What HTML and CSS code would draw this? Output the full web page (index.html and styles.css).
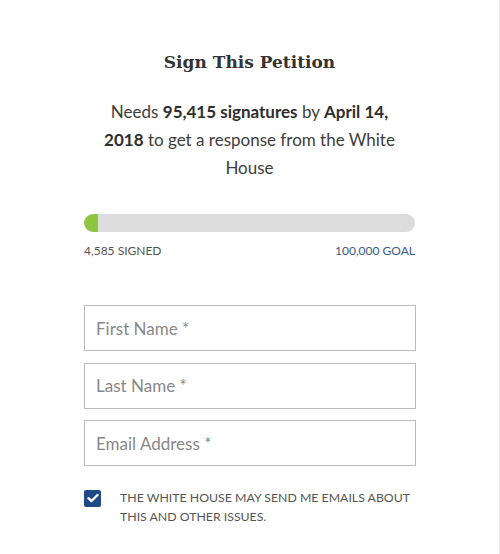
FILE: index.html
```html
<!DOCTYPE html>
<html>
<head>
<meta charset="utf-8">
<link rel="stylesheet" href="styles.css">
</head>
<body>
<div class="page">
  <div class="card">
    <h1 class="title">Sign This Petition</h1>
    <p class="needs">Needs <b>95,415 signatures</b> by <b>April 14, 2018</b> to get a response from the White House</p>
    <div class="bar"><div class="fill" style="width:14px"></div></div>
    <div class="counts"><span class="signed">4,585 SIGNED</span><span class="goal">100,000 GOAL</span></div>
    <form class="form">
      <input class="field" type="text" placeholder="First Name *">
      <input class="field" type="text" placeholder="Last Name *">
      <input class="field" type="text" placeholder="Email Address *">
      <label class="opt">
        <span class="box"><svg width="12" height="10" viewBox="0 0 12 10"><path d="M1.5 5.2 L4.5 8 L10.5 2" fill="none" stroke="#fff" stroke-width="2.4" stroke-linecap="round" stroke-linejoin="round"/></svg></span>
        <span class="opt-text">THE WHITE HOUSE MAY SEND ME EMAILS ABOUT THIS AND OTHER ISSUES.</span>
      </label>
    </form>
  </div>
</div>
</body>
</html>
```
FILE: styles.css
```css
html, body {
  margin: 0;
  padding: 0;
  background: #fff;
}
.page {
  width: 499px;
  height: 554px;
  border-right: 1px solid #e6e6e6;
  box-sizing: content-box;
}
.card {
  padding: 48px 84px 0 84px;
  font-family: Lato, "Open Sans", sans-serif;
  color: #333;
}
.title {
  margin: 0;
  font-family: "DejaVu Serif", serif;
  font-size: 17px;
  font-weight: bold;
  color: #333;
  text-align: center;
  line-height: 28px;
}
.needs {
  margin: 22px 0 0 0;
  padding: 0 16px;
  font-size: 17px;
  line-height: 28px;
  text-align: center;
  color: #3d3d3d;
}
.needs b { font-weight: bold; color: #2e2e2e; }
.bar {
  margin-top: 32px;
  height: 18px;
  border-radius: 9px;
  background: #dcdcdc;
  overflow: hidden;
}
.fill {
  height: 100%;
  background: #8dc63f;
  border-radius: 9px 0 0 9px;
}
.counts {
  display: flex;
  justify-content: space-between;
  margin-top: 10px;
  font-size: 12px;
  line-height: 18px;
}
.signed { color: #555; }
.goal { color: #3b5b80; }
.form {
  margin-top: 45px;
  display: flex;
  flex-direction: column;
  gap: 11.5px;
}
.field {
  box-sizing: border-box;
  width: 332px;
  height: 46px;
  margin: 0;
  border: 1px solid #bdbdbd;
  border-radius: 0;
  padding: 0 11px;
  font-family: Lato, "Open Sans", sans-serif;
  font-size: 17px;
  color: #333;
  outline: none;
}
.field::placeholder { color: #888; }
.opt {
  display: flex;
  align-items: flex-start;
  gap: 19px;
  margin-top: 10px;
}
.box {
  flex: none;
  width: 17px;
  height: 17px;
  margin-top: 2px;
  border-radius: 2px;
  background: #1f4a84;
  display: flex;
  align-items: center;
  justify-content: center;
}
.opt-text {
  font-size: 12.3px;
  line-height: 19px;
  color: #555;
}
```
